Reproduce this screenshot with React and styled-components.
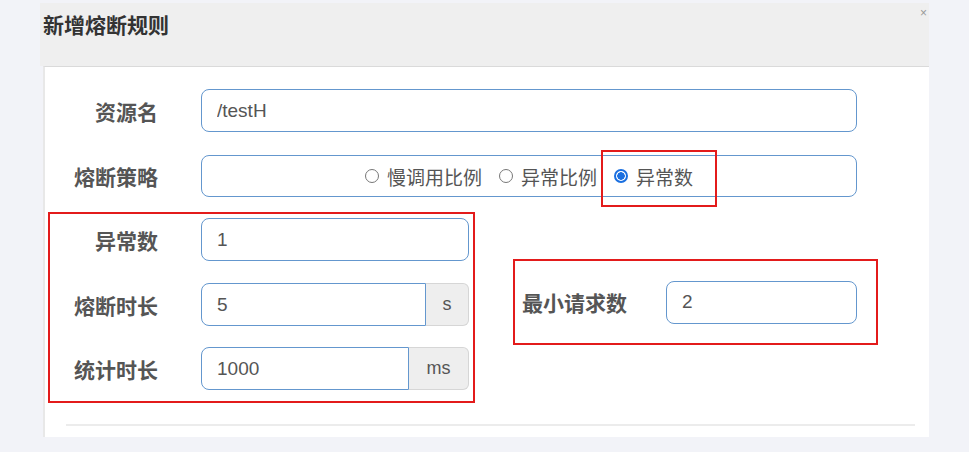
import React from 'react';
import styled, { createGlobalStyle, css } from 'styled-components';

const GlobalStyle = createGlobalStyle`
    body {
        margin: 0;
        background-color: #f2f3f8;
        font-family: "Liberation Sans", "Noto Sans CJK SC", sans-serif;
    }
`;

export default function App(){
    const strategies = [
        { name: "slow", text: "慢调用比例" },
        { name: "ratio", text: "异常比例" },
        { name: "count", text: "异常数", checked: true, marked: true },
    ];

    return(
        <>
            <GlobalStyle />
            <Modal>
                <Header>
                    <Title>新增熔断规则</Title>
                    <Close>×</Close>
                </Header>
                <Body>
                    <Row>
                        <Label width={113}>资源名</Label>
                        <TextInput width={656} defaultValue="/testH" />
                    </Row>
                    <Row>
                        <Label width={113}>熔断策略</Label>
                        <RadioField>
                            {strategies.map((s) => (
                                <RadioOption key={s.name} marked={s.marked}>
                                    <RadioDot checked={s.checked} />
                                    {s.text}
                                </RadioOption>
                            ))}
                        </RadioField>
                    </Row>
                    <Lower>
                        <MarkBox>
                            <Row gap={22}>
                                <Label width={108}>异常数</Label>
                                <TextInput width={268} defaultValue="1" />
                            </Row>
                            <Row gap={21}>
                                <Label width={108}>熔断时长</Label>
                                <InputGroup>
                                    <GroupInput width={225} defaultValue="5" />
                                    <Addon width={43}>s</Addon>
                                </InputGroup>
                            </Row>
                            <Row gap={0}>
                                <Label width={108}>统计时长</Label>
                                <InputGroup>
                                    <GroupInput width={208} defaultValue="1000" />
                                    <Addon width={60}>ms</Addon>
                                </InputGroup>
                            </Row>
                        </MarkBox>
                        <SideBox>
                            <SideLabel>最小请求数</SideLabel>
                            <TextInput width={191} defaultValue="2" />
                        </SideBox>
                    </Lower>
                    <Divider />
                </Body>
            </Modal>
        </>
    );
}

const Modal = styled.div`
    margin-left: 40px;
    width: 889px;
    padding-top: 3px;
`;

const Header = styled.div`
    position: relative;
    height: 63px;
    background-color: #efefef;
    padding: 7px 0 0 3px;
    box-sizing: border-box;
`;

const Title = styled.div`
    font-family: "Noto Sans CJK SC", sans-serif;
    font-weight: 700;
    font-size: 21px;
    color: #333;
    line-height: 28px;
`;

const Close = styled.span`
    position: absolute;
    right: 2px;
    top: 3px;
    font-size: 12px;
    color: #999;
`;

const Body = styled.div`
    margin-left: 3px;
    height: 371px;
    box-sizing: border-box;
    background-color: #fff;
    border-top: 1px solid #dadada;
    border-left: 2px solid #e8e8e8;
    padding-top: 22px;
`;

const Row = styled.div`
    display: flex;
    align-items: center;
    margin-bottom: ${({ gap }) => (gap === undefined ? 23 : gap)}px;
    &:nth-child(2) {
        margin-bottom: ${({ gap }) => (gap === undefined ? 15 : gap)}px;
    }
`;

const Label = styled.div`
    width: ${({ width }) => width}px;
    margin-right: 43px;
    text-align: right;
    font-family: "Noto Sans CJK SC", sans-serif;
    font-weight: 700;
    font-size: 21px;
    color: #555;
`;

const fieldBase = css`
    box-sizing: border-box;
    height: 43px;
    border: 1px solid #6497ce;
    background-color: #fff;
    font-family: "Liberation Sans", sans-serif;
    font-size: 19px;
    color: #555;
    outline: none;
`;

const TextInput = styled.input`
    ${fieldBase};
    width: ${({ width }) => width}px;
    border-radius: 8px;
    padding: 0 15px;
`;

const RadioField = styled.div`
    ${fieldBase};
    width: 656px;
    height: 42px;
    border-radius: 8px;
    display: flex;
    align-items: center;
    justify-content: center;
    gap: 17px;
    font-family: "Noto Sans CJK SC", sans-serif;
`;

const RadioOption = styled.label`
    position: relative;
    display: inline-flex;
    align-items: center;
    gap: 8px;
    font-size: 19px;
    color: #555;
    ${({ marked }) => marked && css`
        &::after {
            content: "";
            position: absolute;
            left: -13px;
            right: -24px;
            top: -13px;
            bottom: -17px;
            border: 2px solid #e31b1b;
        }
    `}
`;

const RadioDot = styled.span`
    width: 14px;
    height: 14px;
    box-sizing: border-box;
    border-radius: 50%;
    ${({ checked }) => checked
        ? css`
            border: 2px solid #1a6fe0;
            background: radial-gradient(circle, #1a6fe0 0 3.5px, #fff 4px);
        `
        : css`
            border: 1px solid #777;
            background-color: #fff;
        `}
`;

const Lower = styled.div`
    display: flex;
    align-items: flex-start;
`;

const MarkBox = styled.div`
    margin-left: 3px;
    width: 427px;
    box-sizing: border-box;
    border: 2px solid #e31b1b;
    padding: 4px 4px 11px 0;
`;

const InputGroup = styled.div`
    display: flex;
`;

const GroupInput = styled.input`
    ${fieldBase};
    width: ${({ width }) => width}px;
    border-radius: 8px 0 0 8px;
    padding: 0 15px;
`;

const Addon = styled.div`
    width: ${({ width }) => width}px;
    height: 43px;
    box-sizing: border-box;
    display: flex;
    align-items: center;
    justify-content: center;
    background-color: #eee;
    border: 1px solid #d6d6d6;
    border-left: none;
    border-radius: 0 6px 6px 0;
    font-family: "Liberation Sans", sans-serif;
    font-size: 18px;
    color: #555;
`;

const SideBox = styled.div`
    margin: 47px 0 0 38px;
    width: 365px;
    height: 86px;
    box-sizing: border-box;
    border: 2px solid #e31b1b;
    padding: 0 0 0 7px;
    display: flex;
    align-items: center;
`;

const SideLabel = styled.div`
    width: 144px;
    font-family: "Noto Sans CJK SC", sans-serif;
    font-weight: 700;
    font-size: 21px;
    color: #555;
`;

const Divider = styled.div`
    margin: 21px 14px 0 21px;
    height: 2px;
    background-color: #ececec;
`;
